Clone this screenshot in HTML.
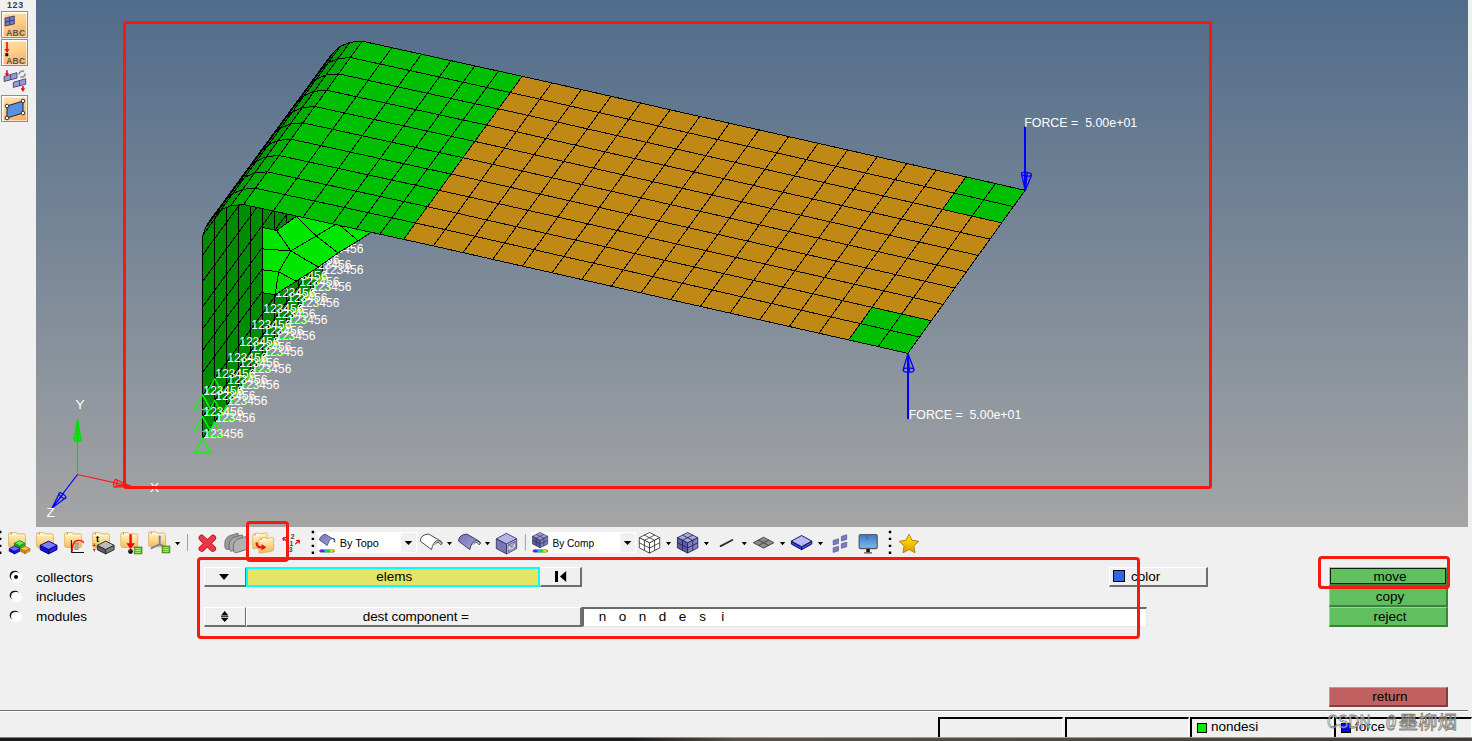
<!DOCTYPE html>
<html><head><meta charset="utf-8"><title>HyperMesh organize</title>
<style>
*{box-sizing:border-box;margin:0;padding:0}
html,body{width:1472px;height:741px;overflow:hidden;background:#f0f0f0;font-family:"Liberation Sans","Noto Sans CJK SC",sans-serif;font-size:13.5px;color:#000}
.abs,.abs>*{position:absolute}
#view{position:absolute;left:36px;top:0;width:1432px;height:527px;background:linear-gradient(180deg,#506c8a 0%,#a5a5a5 100%)}
svg.vp{position:absolute;left:0;top:0;display:block}
.lab text{font-size:12.8px;fill:#fff;font-family:"Liberation Sans",sans-serif}
.frc text{font-size:13.1px;fill:#fff;font-family:"Liberation Sans",sans-serif}
.axl text{font-size:13.6px;fill:#fff;font-family:"Liberation Sans",sans-serif}
.red{position:absolute;border:3.2px solid #f7190f;border-radius:4px;pointer-events:none}
.ico{position:absolute;display:block}
.btn{position:absolute;background:#f0f0f0;border-top:1px solid #fff;border-left:1px solid #fff;border-right:2px solid #6e6e6e;border-bottom:2px solid #6e6e6e;text-align:center;line-height:17px;white-space:nowrap}
.gbtn{position:absolute;left:1329px;width:119px;padding-left:4px;background:#60c060;border-top:1px solid #8fd98f;border-left:1px solid #8fd98f;border-right:2px solid #3f7f3f;border-bottom:2px solid #3f7f3f;text-align:center;line-height:16px}
.radio{position:absolute;left:11.4px;width:9.6px;height:9.6px;border-radius:50%;background:#fff;box-shadow:-1.3px -1.3px 0 0 #1a1a1a, .6px .6px 0 .6px #fff}

.radio.on:after{content:"";position:absolute;left:2.8px;top:2.8px;width:4px;height:4px;border-radius:50%;background:#000}
.rl{position:absolute;left:36px;line-height:16px}
.tb{position:absolute;font-size:11.6px;transform-origin:0 50%;transform:scaleX(.91);white-space:nowrap;line-height:14px}
.dd{position:absolute;width:0;height:0;border-left:3.5px solid transparent;border-right:3.5px solid transparent;border-top:4px solid #000}
.sbox{position:absolute;top:717px;height:21px;border-top:2px solid #000;border-left:2px solid #000;border-right:1px solid #fff;background:#f0f0f0}
</style></head>
<body>
<div id="view"><svg class="vp" width="1432" height="527" viewBox="36 0 1432 527">
<g stroke="#000" stroke-width="1" stroke-linejoin="round" shape-rendering="crispEdges">
<polygon points="322.6,253.3 310.6,269.6 310.6,291.1 322.6,274.8" fill="#008c00"/>
<polygon points="310.6,269.6 298.6,286 298.6,307.5 310.6,291.1" fill="#008c00"/>
<polygon points="298.6,286 286.6,302.4 286.6,323.9 298.6,307.5" fill="#008c00"/>
<polygon points="286.6,302.4 274.6,318.7 274.6,340.2 286.6,323.9" fill="#008c00"/>
<polygon points="274.6,318.7 262.6,335.1 262.6,356.6 274.6,340.2" fill="#008c00"/>
<polygon points="262.6,335.1 250.6,351.4 250.6,372.9 262.6,356.6" fill="#008c00"/>
<polygon points="250.6,351.4 238.6,367.8 238.6,389.2 250.6,372.9" fill="#008c00"/>
<polygon points="238.6,367.8 226.6,384.1 226.6,405.6 238.6,389.2" fill="#008c00"/>
<polygon points="226.6,384.1 214.6,400.4 214.6,421.9 226.6,405.6" fill="#008c00"/>
<polygon points="214.6,400.4 202.6,416.8 202.6,438.3 214.6,421.9" fill="#008c00"/>
<polygon points="322.6,231.6 310.6,248 310.6,269.6 322.6,253.3" fill="#008c00"/>
<polygon points="310.6,248 298.6,264.3 298.6,286 310.6,269.6" fill="#008c00"/>
<polygon points="298.6,264.3 286.6,280.6 286.6,302.4 298.6,286" fill="#008c00"/>
<polygon points="286.6,280.6 274.6,297 274.6,318.7 286.6,302.4" fill="#008c00"/>
<polygon points="274.6,297 262.6,313.4 262.6,335.1 274.6,318.7" fill="#008c00"/>
<polygon points="262.6,313.4 250.6,329.7 250.6,351.4 262.6,335.1" fill="#008c00"/>
<polygon points="250.6,329.7 238.6,346.1 238.6,367.8 250.6,351.4" fill="#008c00"/>
<polygon points="238.6,346.1 226.6,362.4 226.6,384.1 238.6,367.8" fill="#008c00"/>
<polygon points="226.6,362.4 214.6,378.8 214.6,400.4 226.6,384.1" fill="#008c00"/>
<polygon points="214.6,378.8 202.6,395.1 202.6,416.8 214.6,400.4" fill="#008c00"/>
<polygon points="322.6,209.1 310.6,225.5 310.6,248 322.6,231.6" fill="#008c00"/>
<polygon points="310.6,225.5 298.6,241.8 298.6,264.3 310.6,248" fill="#008c00"/>
<polygon points="298.6,241.8 286.6,258.1 286.6,280.6 298.6,264.3" fill="#008c00"/>
<polygon points="286.6,258.1 274.6,274.5 274.6,297 286.6,280.6" fill="#008c00"/>
<polygon points="274.6,274.5 262.6,290.9 262.6,313.4 274.6,297" fill="#008c00"/>
<polygon points="262.6,290.9 250.6,307.2 250.6,329.7 262.6,313.4" fill="#008c00"/>
<polygon points="250.6,307.2 238.6,323.6 238.6,346.1 250.6,329.7" fill="#008c00"/>
<polygon points="238.6,323.6 226.6,339.9 226.6,362.4 238.6,346.1" fill="#008c00"/>
<polygon points="226.6,339.9 214.6,356.2 214.6,378.8 226.6,362.4" fill="#008c00"/>
<polygon points="214.6,356.2 202.6,372.6 202.6,395.1 214.6,378.8" fill="#008c00"/>
<polygon points="322.6,186.8 310.6,203.2 310.6,225.5 322.6,209.1" fill="#008c00"/>
<polygon points="310.6,203.2 298.6,219.5 298.6,241.8 310.6,225.5" fill="#008c00"/>
<polygon points="298.6,219.5 286.6,235.8 286.6,258.1 298.6,241.8" fill="#008c00"/>
<polygon points="286.6,235.8 274.6,252.2 274.6,274.5 286.6,258.1" fill="#008c00"/>
<polygon points="274.6,252.2 262.6,268.6 262.6,290.9 274.6,274.5" fill="#008c00"/>
<polygon points="262.6,268.6 250.6,284.9 250.6,307.2 262.6,290.9" fill="#008c00"/>
<polygon points="250.6,284.9 238.6,301.2 238.6,323.6 250.6,307.2" fill="#008c00"/>
<polygon points="238.6,301.2 226.6,317.6 226.6,339.9 238.6,323.6" fill="#008c00"/>
<polygon points="226.6,317.6 214.6,333.9 214.6,356.2 226.6,339.9" fill="#008c00"/>
<polygon points="214.6,333.9 202.6,350.3 202.6,372.6 214.6,356.2" fill="#008c00"/>
<polygon points="322.6,165.3 310.6,181.7 310.6,203.2 322.6,186.8" fill="#008c00"/>
<polygon points="310.6,181.7 298.6,198 298.6,219.5 310.6,203.2" fill="#008c00"/>
<polygon points="298.6,198 286.6,214.3 286.6,235.8 298.6,219.5" fill="#008c00"/>
<polygon points="286.6,214.3 274.6,230.7 274.6,252.2 286.6,235.8" fill="#008c00"/>
<polygon points="274.6,230.7 262.6,247.1 262.6,268.6 274.6,252.2" fill="#008c00"/>
<polygon points="262.6,247.1 250.6,263.4 250.6,284.9 262.6,268.6" fill="#008c00"/>
<polygon points="250.6,263.4 238.6,279.8 238.6,301.2 250.6,284.9" fill="#008c00"/>
<polygon points="238.6,279.8 226.6,296.1 226.6,317.6 238.6,301.2" fill="#008c00"/>
<polygon points="226.6,296.1 214.6,312.4 214.6,333.9 226.6,317.6" fill="#008c00"/>
<polygon points="214.6,312.4 202.6,328.8 202.6,350.3 214.6,333.9" fill="#008c00"/>
<polygon points="322.6,143.3 310.6,159.7 310.6,181.7 322.6,165.3" fill="#008c00"/>
<polygon points="310.6,159.7 298.6,176 298.6,198 310.6,181.7" fill="#008c00"/>
<polygon points="298.6,176 286.6,192.3 286.6,214.3 298.6,198" fill="#008c00"/>
<polygon points="286.6,192.3 274.6,208.7 274.6,230.7 286.6,214.3" fill="#008c00"/>
<polygon points="274.6,208.7 262.6,225.1 262.6,247.1 274.6,230.7" fill="#008c00"/>
<polygon points="262.6,225.1 250.6,241.4 250.6,263.4 262.6,247.1" fill="#008c00"/>
<polygon points="250.6,241.4 238.6,257.8 238.6,279.8 250.6,263.4" fill="#008c00"/>
<polygon points="238.6,257.8 226.6,274.1 226.6,296.1 238.6,279.8" fill="#008c00"/>
<polygon points="226.6,274.1 214.6,290.4 214.6,312.4 226.6,296.1" fill="#008c00"/>
<polygon points="214.6,290.4 202.6,306.8 202.6,328.8 214.6,312.4" fill="#008c00"/>
<polygon points="322.6,117.9 310.6,134.2 310.6,159.7 322.6,143.3" fill="#008c00"/>
<polygon points="310.6,134.2 298.6,150.6 298.6,176 310.6,159.7" fill="#008c00"/>
<polygon points="298.6,150.6 286.6,166.9 286.6,192.3 298.6,176" fill="#008c00"/>
<polygon points="286.6,166.9 274.6,183.3 274.6,208.7 286.6,192.3" fill="#008c00"/>
<polygon points="274.6,183.3 262.6,199.6 262.6,225.1 274.6,208.7" fill="#008c00"/>
<polygon points="262.6,199.6 250.6,216 250.6,241.4 262.6,225.1" fill="#008c00"/>
<polygon points="250.6,216 238.6,232.3 238.6,257.8 250.6,241.4" fill="#008c00"/>
<polygon points="238.6,232.3 226.6,248.7 226.6,274.1 238.6,257.8" fill="#008c00"/>
<polygon points="226.6,248.7 214.6,265 214.6,290.4 226.6,274.1" fill="#008c00"/>
<polygon points="214.6,265 202.6,281.4 202.6,306.8 214.6,290.4" fill="#008c00"/>
<polygon points="322.6,91.5 310.6,107.8 310.6,134.2 322.6,117.9" fill="#008c00"/>
<polygon points="310.6,107.8 298.6,124.2 298.6,150.6 310.6,134.2" fill="#008c00"/>
<polygon points="298.6,124.2 286.6,140.5 286.6,166.9 298.6,150.6" fill="#008c00"/>
<polygon points="286.6,140.5 274.6,156.9 274.6,183.3 286.6,166.9" fill="#008c00"/>
<polygon points="274.6,156.9 262.6,173.2 262.6,199.6 274.6,183.3" fill="#008c00"/>
<polygon points="262.6,173.2 250.6,189.6 250.6,216 262.6,199.6" fill="#008c00"/>
<polygon points="250.6,189.6 238.6,205.9 238.6,232.3 250.6,216" fill="#008c00"/>
<polygon points="238.6,205.9 226.6,222.3 226.6,248.7 238.6,232.3" fill="#008c00"/>
<polygon points="226.6,222.3 214.6,238.7 214.6,265 226.6,248.7" fill="#008c00"/>
<polygon points="214.6,238.7 202.6,255 202.6,281.4 214.6,265" fill="#008c00"/>
<polygon points="322.9,71.5 310.9,87.8 310.6,107.8 322.6,91.5" fill="#008c00"/>
<polygon points="310.9,87.8 298.9,104.2 298.6,124.2 310.6,107.8" fill="#008c00"/>
<polygon points="298.9,104.2 286.9,120.5 286.6,140.5 298.6,124.2" fill="#008c00"/>
<polygon points="286.9,120.5 274.9,136.9 274.6,156.9 286.6,140.5" fill="#008c00"/>
<polygon points="274.9,136.9 262.9,153.2 262.6,173.2 274.6,156.9" fill="#008c00"/>
<polygon points="262.9,153.2 250.9,169.6 250.6,189.6 262.6,173.2" fill="#008c00"/>
<polygon points="250.9,169.6 238.9,185.9 238.6,205.9 250.6,189.6" fill="#008c00"/>
<polygon points="238.9,185.9 226.9,202.3 226.6,222.3 238.6,205.9" fill="#008c00"/>
<polygon points="226.9,202.3 214.9,218.7 214.6,238.7 226.6,222.3" fill="#008c00"/>
<polygon points="214.9,218.7 202.9,235 202.6,255 214.6,238.7" fill="#008c00"/>
<polygon points="325.4,64.3 313.4,80.7 310.9,87.8 322.9,71.5" fill="#008800"/>
<polygon points="313.4,80.7 301.4,97 298.9,104.2 310.9,87.8" fill="#008800"/>
<polygon points="301.4,97 289.5,113.4 286.9,120.5 298.9,104.2" fill="#008800"/>
<polygon points="289.5,113.4 277.5,129.7 274.9,136.9 286.9,120.5" fill="#008800"/>
<polygon points="277.5,129.7 265.5,146.1 262.9,153.2 274.9,136.9" fill="#008800"/>
<polygon points="265.5,146.1 253.5,162.4 250.9,169.6 262.9,153.2" fill="#008800"/>
<polygon points="253.5,162.4 241.5,178.8 238.9,185.9 250.9,169.6" fill="#008800"/>
<polygon points="241.5,178.8 229.6,195.1 226.9,202.3 238.9,185.9" fill="#008800"/>
<polygon points="229.6,195.1 217.6,211.5 214.9,218.7 226.9,202.3" fill="#008800"/>
<polygon points="217.6,211.5 205.6,227.8 202.9,235 214.9,218.7" fill="#008800"/>
<polygon points="329,57.8 317,74.1 313.4,80.7 325.4,64.3" fill="#008000"/>
<polygon points="317,74.1 305.1,90.5 301.4,97 313.4,80.7" fill="#008000"/>
<polygon points="305.1,90.5 293.1,106.8 289.5,113.4 301.4,97" fill="#008000"/>
<polygon points="293.1,106.8 281.2,123.1 277.5,129.7 289.5,113.4" fill="#008000"/>
<polygon points="281.2,123.1 269.2,139.5 265.5,146.1 277.5,129.7" fill="#008000"/>
<polygon points="269.2,139.5 257.2,155.8 253.5,162.4 265.5,146.1" fill="#008000"/>
<polygon points="257.2,155.8 245.3,172.2 241.5,178.8 253.5,162.4" fill="#008000"/>
<polygon points="245.3,172.2 233.3,188.5 229.6,195.1 241.5,178.8" fill="#008000"/>
<polygon points="233.3,188.5 221.4,204.9 217.6,211.5 229.6,195.1" fill="#008000"/>
<polygon points="221.4,204.9 209.4,221.2 205.6,227.8 217.6,211.5" fill="#008000"/>
</g>
<g fill="none" stroke="#00ff00" stroke-width="1.3">
<path d="M214.6 378.8l-8.2 14.6h16.4z"/>
<path d="M202.6 395.1l-8.2 14.6h16.4z"/>
<path d="M214.6 400.4l-8.2 14.6h16.4z"/>
<path d="M202.6 416.8l-8.2 14.6h16.4z"/>
<path d="M322.6 274.8l-8.2 14.6h16.4z"/>
<path d="M310.6 291.1l-8.2 14.6h16.4z"/>
<path d="M298.6 307.5l-8.2 14.6h16.4z"/>
<path d="M286.6 323.9l-8.2 14.6h16.4z"/>
<path d="M274.6 340.2l-8.2 14.6h16.4z"/>
<path d="M262.6 356.6l-8.2 14.6h16.4z"/>
<path d="M250.6 372.9l-8.2 14.6h16.4z"/>
<path d="M238.6 389.2l-8.2 14.6h16.4z"/>
<path d="M226.6 405.6l-8.2 14.6h16.4z"/>
<path d="M214.6 421.9l-8.2 14.6h16.4z"/>
<path d="M202.6 438.3l-8.2 14.6h16.4z"/>
</g>
<g class="lab">
<text x="323.2" y="231.2" textLength="40.2" lengthAdjust="spacingAndGlyphs">123456</text>
<text x="311.2" y="247.6" textLength="40.2" lengthAdjust="spacingAndGlyphs">123456</text>
<text x="299.2" y="263.9" textLength="40.2" lengthAdjust="spacingAndGlyphs">123456</text>
<text x="287.2" y="280.2" textLength="40.2" lengthAdjust="spacingAndGlyphs">123456</text>
<text x="275.2" y="296.6" textLength="40.2" lengthAdjust="spacingAndGlyphs">123456</text>
<text x="263.2" y="313" textLength="40.2" lengthAdjust="spacingAndGlyphs">123456</text>
<text x="251.2" y="329.3" textLength="40.2" lengthAdjust="spacingAndGlyphs">123456</text>
<text x="239.2" y="345.7" textLength="40.2" lengthAdjust="spacingAndGlyphs">123456</text>
<text x="227.2" y="362" textLength="40.2" lengthAdjust="spacingAndGlyphs">123456</text>
<text x="215.2" y="378.4" textLength="40.2" lengthAdjust="spacingAndGlyphs">123456</text>
<text x="203.2" y="394.7" textLength="40.2" lengthAdjust="spacingAndGlyphs">123456</text>
<text x="323.2" y="252.9" textLength="40.2" lengthAdjust="spacingAndGlyphs">123456</text>
<text x="311.2" y="269.2" textLength="40.2" lengthAdjust="spacingAndGlyphs">123456</text>
<text x="299.2" y="285.6" textLength="40.2" lengthAdjust="spacingAndGlyphs">123456</text>
<text x="287.2" y="302" textLength="40.2" lengthAdjust="spacingAndGlyphs">123456</text>
<text x="275.2" y="318.3" textLength="40.2" lengthAdjust="spacingAndGlyphs">123456</text>
<text x="263.2" y="334.7" textLength="40.2" lengthAdjust="spacingAndGlyphs">123456</text>
<text x="251.2" y="351" textLength="40.2" lengthAdjust="spacingAndGlyphs">123456</text>
<text x="239.2" y="367.4" textLength="40.2" lengthAdjust="spacingAndGlyphs">123456</text>
<text x="227.2" y="383.7" textLength="40.2" lengthAdjust="spacingAndGlyphs">123456</text>
<text x="215.2" y="400.1" textLength="40.2" lengthAdjust="spacingAndGlyphs">123456</text>
<text x="203.2" y="416.4" textLength="40.2" lengthAdjust="spacingAndGlyphs">123456</text>
<text x="323.2" y="274.4" textLength="40.2" lengthAdjust="spacingAndGlyphs">123456</text>
<text x="311.2" y="290.8" textLength="40.2" lengthAdjust="spacingAndGlyphs">123456</text>
<text x="299.2" y="307.1" textLength="40.2" lengthAdjust="spacingAndGlyphs">123456</text>
<text x="287.2" y="323.5" textLength="40.2" lengthAdjust="spacingAndGlyphs">123456</text>
<text x="275.2" y="339.8" textLength="40.2" lengthAdjust="spacingAndGlyphs">123456</text>
<text x="263.2" y="356.2" textLength="40.2" lengthAdjust="spacingAndGlyphs">123456</text>
<text x="251.2" y="372.5" textLength="40.2" lengthAdjust="spacingAndGlyphs">123456</text>
<text x="239.2" y="388.9" textLength="40.2" lengthAdjust="spacingAndGlyphs">123456</text>
<text x="227.2" y="405.2" textLength="40.2" lengthAdjust="spacingAndGlyphs">123456</text>
<text x="215.2" y="421.6" textLength="40.2" lengthAdjust="spacingAndGlyphs">123456</text>
<text x="203.2" y="437.9" textLength="40.2" lengthAdjust="spacingAndGlyphs">123456</text>
</g>
<g stroke="#000" stroke-width="1" stroke-linejoin="round" shape-rendering="crispEdges">
<polygon points="262.4,227.3 276.6,230.6 307.9,208 378.5,227.6 371.7,232 358.2,240.8 338,252.9 318.4,267.1 296.2,281.2 275.2,294.7 262.4,292.7" fill="#00e600"/>
<line x1="276.6" y1="230.6" x2="290.8" y2="250.9"/>
<line x1="262.4" y1="248.9" x2="290.8" y2="250.9"/>
<line x1="290.8" y1="250.9" x2="316.4" y2="236"/>
<line x1="290.8" y1="250.9" x2="278.6" y2="271.8"/>
<line x1="262.4" y1="269.8" x2="278.6" y2="271.8"/>
<line x1="278.6" y1="271.8" x2="296.2" y2="281.2"/>
<line x1="290.8" y1="250.9" x2="318.4" y2="267.1"/>
<line x1="278.6" y1="271.8" x2="275.2" y2="294.7"/>
<line x1="316.4" y1="236" x2="338" y2="252.9"/>
<line x1="337.3" y1="223.2" x2="358.2" y2="240.8"/>
<line x1="296.2" y1="216.5" x2="316.4" y2="236"/>
<line x1="316.4" y1="236" x2="347.8" y2="216.8"/>
<polygon points="334.3,51.8 322.4,68.1 317,74.1 329,57.8" fill="#007a00"/>
<polygon points="322.4,68.1 310.4,84.5 305.1,90.5 317,74.1" fill="#007a00"/>
<polygon points="310.4,84.5 298.5,100.8 293.1,106.8 305.1,90.5" fill="#007a00"/>
<polygon points="298.5,100.8 286.5,117.2 281.2,123.1 293.1,106.8" fill="#007a00"/>
<polygon points="286.5,117.2 274.6,133.5 269.2,139.5 281.2,123.1" fill="#007a00"/>
<polygon points="274.6,133.5 262.7,149.8 257.2,155.8 269.2,139.5" fill="#007a00"/>
<polygon points="262.7,149.8 250.7,166.2 245.3,172.2 257.2,155.8" fill="#007a00"/>
<polygon points="250.7,166.2 238.8,182.5 233.3,188.5 245.3,172.2" fill="#007a00"/>
<polygon points="238.8,182.5 226.8,198.9 221.4,204.9 233.3,188.5" fill="#007a00"/>
<polygon points="226.8,198.9 214.9,215.2 209.4,221.2 221.4,204.9" fill="#007a00"/>
<polygon points="340.1,46.5 328.2,62.9 322.4,68.1 334.3,51.8" fill="#008800"/>
<polygon points="328.2,62.9 316.3,79.2 310.4,84.5 322.4,68.1" fill="#008800"/>
<polygon points="316.3,79.2 304.3,95.5 298.5,100.8 310.4,84.5" fill="#008800"/>
<polygon points="304.3,95.5 292.4,111.9 286.5,117.2 298.5,100.8" fill="#008800"/>
<polygon points="292.4,111.9 280.5,128.2 274.6,133.5 286.5,117.2" fill="#008800"/>
<polygon points="280.5,128.2 268.6,144.6 262.7,149.8 274.6,133.5" fill="#008800"/>
<polygon points="268.6,144.6 256.7,160.9 250.7,166.2 262.7,149.8" fill="#008800"/>
<polygon points="256.7,160.9 244.7,177.2 238.8,182.5 250.7,166.2" fill="#008800"/>
<polygon points="244.7,177.2 232.8,193.6 226.8,198.9 238.8,182.5" fill="#008800"/>
<polygon points="232.8,193.6 220.9,209.9 214.9,215.2 226.8,198.9" fill="#008800"/>
<polygon points="349.9,42.3 338,58.6 328.2,62.9 340.1,46.5" fill="#009a00"/>
<polygon points="338,58.6 326.1,74.9 316.3,79.2 328.2,62.9" fill="#009a00"/>
<polygon points="326.1,74.9 314.2,91.3 304.3,95.5 316.3,79.2" fill="#009a00"/>
<polygon points="314.2,91.3 302.3,107.6 292.4,111.9 304.3,95.5" fill="#009a00"/>
<polygon points="302.3,107.6 290.4,123.9 280.5,128.2 292.4,111.9" fill="#009a00"/>
<polygon points="290.4,123.9 278.5,140.3 268.6,144.6 280.5,128.2" fill="#009a00"/>
<polygon points="278.5,140.3 266.6,156.6 256.7,160.9 268.6,144.6" fill="#009a00"/>
<polygon points="266.6,156.6 254.7,172.9 244.7,177.2 256.7,160.9" fill="#009a00"/>
<polygon points="254.7,172.9 242.8,189.3 232.8,193.6 244.7,177.2" fill="#009a00"/>
<polygon points="242.8,189.3 230.9,205.6 220.9,209.9 232.8,193.6" fill="#009a00"/>
<polygon points="362.3,41.2 350.4,57.5 338,58.6 349.9,42.3" fill="#00ac00"/>
<polygon points="350.4,57.5 338.5,73.9 326.1,74.9 338,58.6" fill="#00ac00"/>
<polygon points="338.5,73.9 326.7,90.2 314.2,91.3 326.1,74.9" fill="#00ac00"/>
<polygon points="326.7,90.2 314.8,106.5 302.3,107.6 314.2,91.3" fill="#00ac00"/>
<polygon points="314.8,106.5 302.9,122.9 290.4,123.9 302.3,107.6" fill="#00ac00"/>
<polygon points="302.9,122.9 291,139.2 278.5,140.3 290.4,123.9" fill="#00ac00"/>
<polygon points="291,139.2 279.1,155.5 266.6,156.6 278.5,140.3" fill="#00ac00"/>
<polygon points="279.1,155.5 267.3,171.8 254.7,172.9 266.6,156.6" fill="#00ac00"/>
<polygon points="267.3,171.8 255.4,188.2 242.8,189.3 254.7,172.9" fill="#00ac00"/>
<polygon points="255.4,188.2 243.5,204.5 230.9,205.6 242.8,189.3" fill="#00ac00"/>
<polygon points="362.3,41.2 391.9,47.7 380,64 350.4,57.5" fill="#00be00"/>
<polygon points="350.4,57.5 380,64 368.2,80.3 338.5,73.9" fill="#00be00"/>
<polygon points="338.5,73.9 368.2,80.3 356.3,96.7 326.7,90.2" fill="#00be00"/>
<polygon points="326.7,90.2 356.3,96.7 344.4,113 314.8,106.5" fill="#00be00"/>
<polygon points="314.8,106.5 344.4,113 332.6,129.3 302.9,122.9" fill="#00be00"/>
<polygon points="302.9,122.9 332.6,129.3 320.7,145.6 291,139.2" fill="#00be00"/>
<polygon points="291,139.2 320.7,145.6 308.8,162 279.1,155.5" fill="#00be00"/>
<polygon points="279.1,155.5 308.8,162 296.9,178.3 267.3,171.8" fill="#00be00"/>
<polygon points="267.3,171.8 296.9,178.3 285,194.6 255.4,188.2" fill="#00be00"/>
<polygon points="255.4,188.2 285,194.6 273.2,211 243.5,204.5" fill="#00be00"/>
<polygon points="391.9,47.7 421.5,54.2 409.7,70.5 380,64" fill="#00be00"/>
<polygon points="380,64 409.7,70.5 397.8,86.8 368.2,80.3" fill="#00be00"/>
<polygon points="368.2,80.3 397.8,86.8 385.9,103.1 356.3,96.7" fill="#00be00"/>
<polygon points="356.3,96.7 385.9,103.1 374.1,119.5 344.4,113" fill="#00be00"/>
<polygon points="344.4,113 374.1,119.5 362.2,135.8 332.6,129.3" fill="#00be00"/>
<polygon points="332.6,129.3 362.2,135.8 350.3,152.1 320.7,145.6" fill="#00be00"/>
<polygon points="320.7,145.6 350.3,152.1 338.5,168.4 308.8,162" fill="#00be00"/>
<polygon points="308.8,162 338.5,168.4 326.6,184.7 296.9,178.3" fill="#00be00"/>
<polygon points="296.9,178.3 326.6,184.7 314.7,201.1 285,194.6" fill="#00be00"/>
<polygon points="285,194.6 314.7,201.1 302.8,217.4 273.2,211" fill="#00be00"/>
<polygon points="421.5,54.2 451.1,60.7 439.3,77 409.7,70.5" fill="#00be00"/>
<polygon points="409.7,70.5 439.3,77 427.4,93.3 397.8,86.8" fill="#00be00"/>
<polygon points="397.8,86.8 427.4,93.3 415.6,109.6 385.9,103.1" fill="#00be00"/>
<polygon points="385.9,103.1 415.6,109.6 403.7,125.9 374.1,119.5" fill="#00be00"/>
<polygon points="374.1,119.5 403.7,125.9 391.8,142.2 362.2,135.8" fill="#00be00"/>
<polygon points="362.2,135.8 391.8,142.2 380,158.6 350.3,152.1" fill="#00be00"/>
<polygon points="350.3,152.1 380,158.6 368.1,174.9 338.5,168.4" fill="#00be00"/>
<polygon points="338.5,168.4 368.1,174.9 356.2,191.2 326.6,184.7" fill="#00be00"/>
<polygon points="326.6,184.7 356.2,191.2 344.4,207.5 314.7,201.1" fill="#00be00"/>
<polygon points="314.7,201.1 344.4,207.5 332.5,223.9 302.8,217.4" fill="#00be00"/>
<polygon points="451.1,60.7 474.8,65.9 463,82.2 439.3,77" fill="#00be00"/>
<polygon points="439.3,77 463,82.2 451.1,98.5 427.4,93.3" fill="#00be00"/>
<polygon points="427.4,93.3 451.1,98.5 439.3,114.8 415.6,109.6" fill="#00be00"/>
<polygon points="415.6,109.6 439.3,114.8 427.4,131.1 403.7,125.9" fill="#00be00"/>
<polygon points="403.7,125.9 427.4,131.1 415.6,147.4 391.8,142.2" fill="#00be00"/>
<polygon points="391.8,142.2 415.6,147.4 403.7,163.7 380,158.6" fill="#00be00"/>
<polygon points="380,158.6 403.7,163.7 391.8,180 368.1,174.9" fill="#00be00"/>
<polygon points="368.1,174.9 391.8,180 380,196.4 356.2,191.2" fill="#00be00"/>
<polygon points="356.2,191.2 380,196.4 368.1,212.7 344.4,207.5" fill="#00be00"/>
<polygon points="344.4,207.5 368.1,212.7 356.2,229 332.5,223.9" fill="#00be00"/>
<polygon points="474.8,65.9 498.5,71.1 486.7,87.4 463,82.2" fill="#00be00"/>
<polygon points="463,82.2 486.7,87.4 474.8,103.7 451.1,98.5" fill="#00be00"/>
<polygon points="451.1,98.5 474.8,103.7 463,120 439.3,114.8" fill="#00be00"/>
<polygon points="439.3,114.8 463,120 451.1,136.3 427.4,131.1" fill="#00be00"/>
<polygon points="427.4,131.1 451.1,136.3 439.3,152.6 415.6,147.4" fill="#00be00"/>
<polygon points="415.6,147.4 439.3,152.6 427.4,168.9 403.7,163.7" fill="#00be00"/>
<polygon points="403.7,163.7 427.4,168.9 415.6,185.2 391.8,180" fill="#00be00"/>
<polygon points="391.8,180 415.6,185.2 403.7,201.5 380,196.4" fill="#00be00"/>
<polygon points="380,196.4 403.7,201.5 391.8,217.9 368.1,212.7" fill="#00be00"/>
<polygon points="368.1,212.7 391.8,217.9 379.9,234.2 356.2,229" fill="#00be00"/>
<polygon points="498.5,71.1 522.2,76.3 510.3,92.6 486.7,87.4" fill="#00be00"/>
<polygon points="486.7,87.4 510.3,92.6 498.5,108.9 474.8,103.7" fill="#00be00"/>
<polygon points="474.8,103.7 498.5,108.9 486.7,125.1 463,120" fill="#00be00"/>
<polygon points="463,120 486.7,125.1 474.8,141.4 451.1,136.3" fill="#00be00"/>
<polygon points="451.1,136.3 474.8,141.4 463,157.7 439.3,152.6" fill="#00be00"/>
<polygon points="439.3,152.6 463,157.7 451.1,174 427.4,168.9" fill="#00be00"/>
<polygon points="427.4,168.9 451.1,174 439.3,190.4 415.6,185.2" fill="#00be00"/>
<polygon points="415.6,185.2 439.3,190.4 427.4,206.7 403.7,201.5" fill="#00be00"/>
<polygon points="403.7,201.5 427.4,206.7 415.5,223 391.8,217.9" fill="#00be00"/>
<polygon points="391.8,217.9 415.5,223 403.7,239.4 379.9,234.2" fill="#00be00"/>
<polygon points="522.2,76.3 551.8,82.9 539.9,99.1 510.3,92.6" fill="#c08814"/>
<polygon points="510.3,92.6 539.9,99.1 528.1,115.4 498.5,108.9" fill="#c08814"/>
<polygon points="498.5,108.9 528.1,115.4 516.3,131.7 486.7,125.1" fill="#c08814"/>
<polygon points="486.7,125.1 516.3,131.7 504.5,148 474.8,141.4" fill="#c08814"/>
<polygon points="474.8,141.4 504.5,148 492.6,164.3 463,157.7" fill="#c08814"/>
<polygon points="463,157.7 492.6,164.3 480.8,180.6 451.1,174" fill="#c08814"/>
<polygon points="451.1,174 480.8,180.6 468.9,196.9 439.3,190.4" fill="#c08814"/>
<polygon points="439.3,190.4 468.9,196.9 457.1,213.2 427.4,206.7" fill="#c08814"/>
<polygon points="427.4,206.7 457.1,213.2 445.2,229.6 415.5,223" fill="#c08814"/>
<polygon points="415.5,223 445.2,229.6 433.3,245.9 403.7,239.4" fill="#c08814"/>
<polygon points="551.8,82.9 581.4,89.6 569.6,105.9 539.9,99.1" fill="#c08814"/>
<polygon points="539.9,99.1 569.6,105.9 557.7,122.1 528.1,115.4" fill="#c08814"/>
<polygon points="528.1,115.4 557.7,122.1 545.9,138.4 516.3,131.7" fill="#c08814"/>
<polygon points="516.3,131.7 545.9,138.4 534.1,154.7 504.5,148" fill="#c08814"/>
<polygon points="504.5,148 534.1,154.7 522.3,171 492.6,164.3" fill="#c08814"/>
<polygon points="492.6,164.3 522.3,171 510.4,187.3 480.8,180.6" fill="#c08814"/>
<polygon points="480.8,180.6 510.4,187.3 498.6,203.6 468.9,196.9" fill="#c08814"/>
<polygon points="468.9,196.9 498.6,203.6 486.7,220 457.1,213.2" fill="#c08814"/>
<polygon points="457.1,213.2 486.7,220 474.9,236.3 445.2,229.6" fill="#c08814"/>
<polygon points="445.2,229.6 474.9,236.3 463,252.6 433.3,245.9" fill="#c08814"/>
<polygon points="581.4,89.6 611,96.3 599.2,112.6 569.6,105.9" fill="#c08814"/>
<polygon points="569.6,105.9 599.2,112.6 587.4,128.9 557.7,122.1" fill="#c08814"/>
<polygon points="557.7,122.1 587.4,128.9 575.6,145.2 545.9,138.4" fill="#c08814"/>
<polygon points="545.9,138.4 575.6,145.2 563.7,161.4 534.1,154.7" fill="#c08814"/>
<polygon points="534.1,154.7 563.7,161.4 551.9,177.7 522.3,171" fill="#c08814"/>
<polygon points="522.3,171 551.9,177.7 540.1,194.1 510.4,187.3" fill="#c08814"/>
<polygon points="510.4,187.3 540.1,194.1 528.2,210.4 498.6,203.6" fill="#c08814"/>
<polygon points="498.6,203.6 528.2,210.4 516.4,226.7 486.7,220" fill="#c08814"/>
<polygon points="486.7,220 516.4,226.7 504.6,243 474.9,236.3" fill="#c08814"/>
<polygon points="474.9,236.3 504.6,243 492.7,259.4 463,252.6" fill="#c08814"/>
<polygon points="611,96.3 640.6,103 628.8,119.3 599.2,112.6" fill="#c08814"/>
<polygon points="599.2,112.6 628.8,119.3 617,135.6 587.4,128.9" fill="#c08814"/>
<polygon points="587.4,128.9 617,135.6 605.2,151.9 575.6,145.2" fill="#c08814"/>
<polygon points="575.6,145.2 605.2,151.9 593.4,168.2 563.7,161.4" fill="#c08814"/>
<polygon points="563.7,161.4 593.4,168.2 581.6,184.5 551.9,177.7" fill="#c08814"/>
<polygon points="551.9,177.7 581.6,184.5 569.7,200.8 540.1,194.1" fill="#c08814"/>
<polygon points="540.1,194.1 569.7,200.8 557.9,217.1 528.2,210.4" fill="#c08814"/>
<polygon points="528.2,210.4 557.9,217.1 546.1,233.4 516.4,226.7" fill="#c08814"/>
<polygon points="516.4,226.7 546.1,233.4 534.2,249.7 504.6,243" fill="#c08814"/>
<polygon points="504.6,243 534.2,249.7 522.4,266.1 492.7,259.4" fill="#c08814"/>
<polygon points="640.6,103 670.2,109.8 658.4,126 628.8,119.3" fill="#c08814"/>
<polygon points="628.8,119.3 658.4,126 646.6,142.3 617,135.6" fill="#c08814"/>
<polygon points="617,135.6 646.6,142.3 634.8,158.6 605.2,151.9" fill="#c08814"/>
<polygon points="605.2,151.9 634.8,158.6 623,174.9 593.4,168.2" fill="#c08814"/>
<polygon points="593.4,168.2 623,174.9 611.2,191.2 581.6,184.5" fill="#c08814"/>
<polygon points="581.6,184.5 611.2,191.2 599.4,207.5 569.7,200.8" fill="#c08814"/>
<polygon points="569.7,200.8 599.4,207.5 587.6,223.8 557.9,217.1" fill="#c08814"/>
<polygon points="557.9,217.1 587.6,223.8 575.7,240.1 546.1,233.4" fill="#c08814"/>
<polygon points="546.1,233.4 575.7,240.1 563.9,256.5 534.2,249.7" fill="#c08814"/>
<polygon points="534.2,249.7 563.9,256.5 552.1,272.8 522.4,266.1" fill="#c08814"/>
<polygon points="670.2,109.8 699.8,116.5 688,132.7 658.4,126" fill="#c08814"/>
<polygon points="658.4,126 688,132.7 676.2,149 646.6,142.3" fill="#c08814"/>
<polygon points="646.6,142.3 676.2,149 664.4,165.3 634.8,158.6" fill="#c08814"/>
<polygon points="634.8,158.6 664.4,165.3 652.6,181.6 623,174.9" fill="#c08814"/>
<polygon points="623,174.9 652.6,181.6 640.8,197.9 611.2,191.2" fill="#c08814"/>
<polygon points="611.2,191.2 640.8,197.9 629,214.2 599.4,207.5" fill="#c08814"/>
<polygon points="599.4,207.5 629,214.2 617.2,230.5 587.6,223.8" fill="#c08814"/>
<polygon points="587.6,223.8 617.2,230.5 605.4,246.8 575.7,240.1" fill="#c08814"/>
<polygon points="575.7,240.1 605.4,246.8 593.6,263.2 563.9,256.5" fill="#c08814"/>
<polygon points="563.9,256.5 593.6,263.2 581.7,279.5 552.1,272.8" fill="#c08814"/>
<polygon points="699.8,116.5 729.4,123.2 717.6,139.5 688,132.7" fill="#c08814"/>
<polygon points="688,132.7 717.6,139.5 705.8,155.7 676.2,149" fill="#c08814"/>
<polygon points="676.2,149 705.8,155.7 694,172 664.4,165.3" fill="#c08814"/>
<polygon points="664.4,165.3 694,172 682.3,188.3 652.6,181.6" fill="#c08814"/>
<polygon points="652.6,181.6 682.3,188.3 670.5,204.6 640.8,197.9" fill="#c08814"/>
<polygon points="640.8,197.9 670.5,204.6 658.7,220.9 629,214.2" fill="#c08814"/>
<polygon points="629,214.2 658.7,220.9 646.9,237.2 617.2,230.5" fill="#c08814"/>
<polygon points="617.2,230.5 646.9,237.2 635,253.6 605.4,246.8" fill="#c08814"/>
<polygon points="605.4,246.8 635,253.6 623.2,269.9 593.6,263.2" fill="#c08814"/>
<polygon points="593.6,263.2 623.2,269.9 611.4,286.2 581.7,279.5" fill="#c08814"/>
<polygon points="729.4,123.2 759,129.9 747.2,146.2 717.6,139.5" fill="#c08814"/>
<polygon points="717.6,139.5 747.2,146.2 735.4,162.4 705.8,155.7" fill="#c08814"/>
<polygon points="705.8,155.7 735.4,162.4 723.7,178.7 694,172" fill="#c08814"/>
<polygon points="694,172 723.7,178.7 711.9,195 682.3,188.3" fill="#c08814"/>
<polygon points="682.3,188.3 711.9,195 700.1,211.3 670.5,204.6" fill="#c08814"/>
<polygon points="670.5,204.6 700.1,211.3 688.3,227.6 658.7,220.9" fill="#c08814"/>
<polygon points="658.7,220.9 688.3,227.6 676.5,244 646.9,237.2" fill="#c08814"/>
<polygon points="646.9,237.2 676.5,244 664.7,260.3 635,253.6" fill="#c08814"/>
<polygon points="635,253.6 664.7,260.3 652.9,276.6 623.2,269.9" fill="#c08814"/>
<polygon points="623.2,269.9 652.9,276.6 641.1,292.9 611.4,286.2" fill="#c08814"/>
<polygon points="759,129.9 788.6,136.6 776.8,152.9 747.2,146.2" fill="#c08814"/>
<polygon points="747.2,146.2 776.8,152.9 765,169.2 735.4,162.4" fill="#c08814"/>
<polygon points="735.4,162.4 765,169.2 753.3,185.4 723.7,178.7" fill="#c08814"/>
<polygon points="723.7,178.7 753.3,185.4 741.5,201.7 711.9,195" fill="#c08814"/>
<polygon points="711.9,195 741.5,201.7 729.7,218 700.1,211.3" fill="#c08814"/>
<polygon points="700.1,211.3 729.7,218 717.9,234.4 688.3,227.6" fill="#c08814"/>
<polygon points="688.3,227.6 717.9,234.4 706.1,250.7 676.5,244" fill="#c08814"/>
<polygon points="676.5,244 706.1,250.7 694.3,267 664.7,260.3" fill="#c08814"/>
<polygon points="664.7,260.3 694.3,267 682.5,283.3 652.9,276.6" fill="#c08814"/>
<polygon points="652.9,276.6 682.5,283.3 670.7,299.7 641.1,292.9" fill="#c08814"/>
<polygon points="788.6,136.6 818.1,143.3 806.4,159.6 776.8,152.9" fill="#c08814"/>
<polygon points="776.8,152.9 806.4,159.6 794.6,175.9 765,169.2" fill="#c08814"/>
<polygon points="765,169.2 794.6,175.9 782.9,192.2 753.3,185.4" fill="#c08814"/>
<polygon points="753.3,185.4 782.9,192.2 771.1,208.5 741.5,201.7" fill="#c08814"/>
<polygon points="741.5,201.7 771.1,208.5 759.3,224.8 729.7,218" fill="#c08814"/>
<polygon points="729.7,218 759.3,224.8 747.6,241.1 717.9,234.4" fill="#c08814"/>
<polygon points="717.9,234.4 747.6,241.1 735.8,257.4 706.1,250.7" fill="#c08814"/>
<polygon points="706.1,250.7 735.8,257.4 724,273.7 694.3,267" fill="#c08814"/>
<polygon points="694.3,267 724,273.7 712.2,290 682.5,283.3" fill="#c08814"/>
<polygon points="682.5,283.3 712.2,290 700.4,306.4 670.7,299.7" fill="#c08814"/>
<polygon points="818.1,143.3 847.7,150 836,166.3 806.4,159.6" fill="#c08814"/>
<polygon points="806.4,159.6 836,166.3 824.2,182.6 794.6,175.9" fill="#c08814"/>
<polygon points="794.6,175.9 824.2,182.6 812.5,198.9 782.9,192.2" fill="#c08814"/>
<polygon points="782.9,192.2 812.5,198.9 800.7,215.2 771.1,208.5" fill="#c08814"/>
<polygon points="771.1,208.5 800.7,215.2 788.9,231.5 759.3,224.8" fill="#c08814"/>
<polygon points="759.3,224.8 788.9,231.5 777.2,247.8 747.6,241.1" fill="#c08814"/>
<polygon points="747.6,241.1 777.2,247.8 765.4,264.1 735.8,257.4" fill="#c08814"/>
<polygon points="735.8,257.4 765.4,264.1 753.6,280.4 724,273.7" fill="#c08814"/>
<polygon points="724,273.7 753.6,280.4 741.8,296.8 712.2,290" fill="#c08814"/>
<polygon points="712.2,290 741.8,296.8 730,313.1 700.4,306.4" fill="#c08814"/>
<polygon points="847.7,150 877.3,156.7 865.5,173 836,166.3" fill="#c08814"/>
<polygon points="836,166.3 865.5,173 853.8,189.3 824.2,182.6" fill="#c08814"/>
<polygon points="824.2,182.6 853.8,189.3 842.1,205.6 812.5,198.9" fill="#c08814"/>
<polygon points="812.5,198.9 842.1,205.6 830.3,221.9 800.7,215.2" fill="#c08814"/>
<polygon points="800.7,215.2 830.3,221.9 818.5,238.2 788.9,231.5" fill="#c08814"/>
<polygon points="788.9,231.5 818.5,238.2 806.8,254.5 777.2,247.8" fill="#c08814"/>
<polygon points="777.2,247.8 806.8,254.5 795,270.8 765.4,264.1" fill="#c08814"/>
<polygon points="765.4,264.1 795,270.8 783.2,287.1 753.6,280.4" fill="#c08814"/>
<polygon points="753.6,280.4 783.2,287.1 771.5,303.5 741.8,296.8" fill="#c08814"/>
<polygon points="741.8,296.8 771.5,303.5 759.7,319.8 730,313.1" fill="#c08814"/>
<polygon points="877.3,156.7 906.8,163.5 895.1,179.7 865.5,173" fill="#c08814"/>
<polygon points="865.5,173 895.1,179.7 883.4,196 853.8,189.3" fill="#c08814"/>
<polygon points="853.8,189.3 883.4,196 871.6,212.3 842.1,205.6" fill="#c08814"/>
<polygon points="842.1,205.6 871.6,212.3 859.9,228.6 830.3,221.9" fill="#c08814"/>
<polygon points="830.3,221.9 859.9,228.6 848.2,244.9 818.5,238.2" fill="#c08814"/>
<polygon points="818.5,238.2 848.2,244.9 836.4,261.2 806.8,254.5" fill="#c08814"/>
<polygon points="806.8,254.5 836.4,261.2 824.6,277.5 795,270.8" fill="#c08814"/>
<polygon points="795,270.8 824.6,277.5 812.9,293.8 783.2,287.1" fill="#c08814"/>
<polygon points="783.2,287.1 812.9,293.8 801.1,310.2 771.5,303.5" fill="#c08814"/>
<polygon points="771.5,303.5 801.1,310.2 789.3,326.5 759.7,319.8" fill="#c08814"/>
<polygon points="906.8,163.5 936.4,170.2 924.7,186.4 895.1,179.7" fill="#c08814"/>
<polygon points="895.1,179.7 924.7,186.4 913,202.7 883.4,196" fill="#c08814"/>
<polygon points="883.4,196 913,202.7 901.2,219 871.6,212.3" fill="#c08814"/>
<polygon points="871.6,212.3 901.2,219 889.5,235.3 859.9,228.6" fill="#c08814"/>
<polygon points="859.9,228.6 889.5,235.3 877.8,251.6 848.2,244.9" fill="#c08814"/>
<polygon points="848.2,244.9 877.8,251.6 866,267.9 836.4,261.2" fill="#c08814"/>
<polygon points="836.4,261.2 866,267.9 854.3,284.2 824.6,277.5" fill="#c08814"/>
<polygon points="824.6,277.5 854.3,284.2 842.5,300.6 812.9,293.8" fill="#c08814"/>
<polygon points="812.9,293.8 842.5,300.6 830.7,316.9 801.1,310.2" fill="#c08814"/>
<polygon points="801.1,310.2 830.7,316.9 819,333.2 789.3,326.5" fill="#c08814"/>
<polygon points="936.4,170.2 966,176.9 954.2,193.1 924.7,186.4" fill="#c08814"/>
<polygon points="924.7,186.4 954.2,193.1 942.5,209.4 913,202.7" fill="#c08814"/>
<polygon points="913,202.7 942.5,209.4 930.8,225.7 901.2,219" fill="#c08814"/>
<polygon points="901.2,219 930.8,225.7 919.1,242 889.5,235.3" fill="#c08814"/>
<polygon points="889.5,235.3 919.1,242 907.3,258.3 877.8,251.6" fill="#c08814"/>
<polygon points="877.8,251.6 907.3,258.3 895.6,274.6 866,267.9" fill="#c08814"/>
<polygon points="866,267.9 895.6,274.6 883.9,290.9 854.3,284.2" fill="#c08814"/>
<polygon points="854.3,284.2 883.9,290.9 872.1,307.3 842.5,300.6" fill="#c08814"/>
<polygon points="842.5,300.6 872.1,307.3 860.4,323.6 830.7,316.9" fill="#c08814"/>
<polygon points="830.7,316.9 860.4,323.6 848.6,339.9 819,333.2" fill="#c08814"/>
<polygon points="966,176.9 995.5,183.6 983.8,199.8 954.2,193.1" fill="#00be00"/>
<polygon points="954.2,193.1 983.8,199.8 972.1,216.1 942.5,209.4" fill="#00be00"/>
<polygon points="942.5,209.4 972.1,216.1 960.4,232.4 930.8,225.7" fill="#c08814"/>
<polygon points="930.8,225.7 960.4,232.4 948.7,248.7 919.1,242" fill="#c08814"/>
<polygon points="919.1,242 948.7,248.7 936.9,265 907.3,258.3" fill="#c08814"/>
<polygon points="907.3,258.3 936.9,265 925.2,281.3 895.6,274.6" fill="#c08814"/>
<polygon points="895.6,274.6 925.2,281.3 913.5,297.6 883.9,290.9" fill="#c08814"/>
<polygon points="883.9,290.9 913.5,297.6 901.7,314 872.1,307.3" fill="#c08814"/>
<polygon points="872.1,307.3 901.7,314 890,330.3 860.4,323.6" fill="#00be00"/>
<polygon points="860.4,323.6 890,330.3 878.2,346.6 848.6,339.9" fill="#00be00"/>
<polygon points="995.5,183.6 1025.1,190.3 1013.4,206.6 983.8,199.8" fill="#00be00"/>
<polygon points="983.8,199.8 1013.4,206.6 1001.7,222.8 972.1,216.1" fill="#00be00"/>
<polygon points="972.1,216.1 1001.7,222.8 990,239.1 960.4,232.4" fill="#c08814"/>
<polygon points="960.4,232.4 990,239.1 978.2,255.4 948.7,248.7" fill="#c08814"/>
<polygon points="948.7,248.7 978.2,255.4 966.5,271.7 936.9,265" fill="#c08814"/>
<polygon points="936.9,265 966.5,271.7 954.8,288 925.2,281.3" fill="#c08814"/>
<polygon points="925.2,281.3 954.8,288 943.1,304.4 913.5,297.6" fill="#c08814"/>
<polygon points="913.5,297.6 943.1,304.4 931.3,320.7 901.7,314" fill="#c08814"/>
<polygon points="901.7,314 931.3,320.7 919.6,337 890,330.3" fill="#00be00"/>
<polygon points="890,330.3 919.6,337 907.8,353.4 878.2,346.6" fill="#00be00"/>
</g>
<g stroke="#0000ff" stroke-width="2" fill="none">
<line x1="1025" y1="126.5" x2="1025" y2="190"/>
<path stroke-width="1.3" d="M1025.3 190.5L1021.4 173.4M1025.3 190.5L1031.6 175M1025.3 190.5L1027.3 172.6"/><ellipse stroke-width="1.3" cx="1026.5" cy="174.2" rx="5.1" ry="1.8" transform="rotate(8 1026.5 174.2)"/>
<line x1="908" y1="419" x2="908" y2="354"/>
<path stroke-width="1.3" d="M908 353.6L903.4 369M908 353.6L914 369.6M908 353.6L909.5 371.5"/><ellipse stroke-width="1.3" cx="908.6" cy="370" rx="5.4" ry="2.2"/>
</g>
<g class="frc"><text x="1024.2" y="126.6" textLength="113" lengthAdjust="spacingAndGlyphs" xml:space="preserve">FORCE =  5.00e+01</text>
<text x="908.8" y="418.6" textLength="112.5" lengthAdjust="spacingAndGlyphs" xml:space="preserve">FORCE =  5.00e+01</text></g>
<g fill="none" stroke-width="1.2">
<g stroke="#00e000"><line x1="77.5" y1="474.5" x2="77.5" y2="420"/><path d="M77.5 419.5L74 439M77.5 419.5L81 439M77.5 419.5L76.5 441M77.5 419.5L78.8 441"/><ellipse cx="77.5" cy="439.5" rx="3.6" ry="1.6"/></g>
<g stroke="#ff1a1a"><line x1="77.5" y1="474.5" x2="131" y2="486.3"/><path d="M131 486.3L115.5 479.4M131 486.3L114.6 487.2M131 486.3L116.6 485.4"/><ellipse cx="115.4" cy="483.2" rx="1.6" ry="4" transform="rotate(12 115.4 483.2)"/></g>
<g stroke="#0000ff"><line x1="77.5" y1="474.5" x2="52" y2="508"/><path d="M52 508L59 494M52 508L66 497.5M52 508L63.5 493.6"/><ellipse cx="62.4" cy="495.6" rx="4.2" ry="1.7" transform="rotate(38 62.4 495.6)"/></g>
</g>
<g class="axl"><text x="75.6" y="408.5">Y</text><text x="150" y="491.5">X</text><text x="46.6" y="516.8">Z</text></g>
</svg></div>
<div style="position:absolute;left:7px;top:0;font-size:8.8px;font-weight:bold;color:#3c3c3c;line-height:10px;letter-spacing:.7px">123</div>
<div style="position:absolute;left:1px;width:27px;height:27px;border:1px solid #8e8e8e;box-shadow:inset 1.500px 1.500px 0 #fff,inset -1px -1px 0 rgba(255,255,255,.6);background:linear-gradient(160deg,#ffe2ae 0%,#ffd08c 45%,#f8a654 100%);top:11px"><svg class="ico" style="left:0;top:0" width="26" height="26" viewBox="0 0 26 26"><path d="M3 6l9.300-2v8l-9.300 2z" fill="#7878c0" stroke="#30306a" stroke-width=".8"/><path d="M3 10l9.300-2M7.600 5v8" stroke="#30306a" stroke-width=".8"/><text x="4.200" y="23.600" font-size="8.300" font-weight="bold" fill="#555" font-family="Liberation Sans,sans-serif" letter-spacing=".4">ABC</text></svg></div>
<div style="position:absolute;left:1px;width:27px;height:27px;border:1px solid #8e8e8e;box-shadow:inset 1.500px 1.500px 0 #fff,inset -1px -1px 0 rgba(255,255,255,.6);background:linear-gradient(160deg,#ffe2ae 0%,#ffd08c 45%,#f8a654 100%);top:39px"><svg class="ico" style="left:0;top:0" width="26" height="26" viewBox="0 0 26 26"><path d="M5 2v9" stroke="#e01010" stroke-width="1.600"/><path d="M2.600 9h4.800L5 13z" fill="#e01010"/><circle cx="4.800" cy="14.800" r="1.700" fill="#111"/><text x="4.200" y="23.600" font-size="8.300" font-weight="bold" fill="#555" font-family="Liberation Sans,sans-serif" letter-spacing=".4">ABC</text></svg></div>
<svg class="ico" style="left:0;top:66px" width="30" height="28" viewBox="0 66 30 28"><g fill="#9a9ad2" stroke="#34346e" stroke-width=".8" stroke-linejoin="round"><path d="M4.100 76.400L17 72.700V78.200L4.100 81.400z"/><path d="M13.300 82.300L25.700 78.700V84.200L13.300 87.400z"/><path d="M10.600 74.600v5.300M19.500 80.500v5.300" fill="none"/></g><path d="M6.900 70.200v4" stroke="#e80c0c" stroke-width="1.600"/><path d="M4.800 73.200h4.200L6.900 76.600z" fill="#e80c0c"/><path d="M22.900 86v3.500" stroke="#e80c0c" stroke-width="1.600"/><path d="M20.600 88.300h4.600L22.900 92z" fill="#e80c0c"/><path d="M19.200 74.500a3.200 3.200 0 0 1 4.800-3M25 73.500a3.200 3.200 0 0 1-4.800 3.200" stroke="#8c8c8c" stroke-width="1.500" fill="none"/></svg>
<div style="position:absolute;left:1px;width:27px;height:27px;border:1px solid #8e8e8e;box-shadow:inset 1.500px 1.500px 0 #fff,inset -1px -1px 0 rgba(255,255,255,.6);background:linear-gradient(160deg,#ffe2ae 0%,#ffd08c 45%,#f8a654 100%);top:95px"><svg class="ico" style="left:-1px;top:0" width="26" height="26" viewBox="0 0 26 26"><path d="M6 10l16-5v12l-16 5z" fill="#5a90e0" stroke="#223" stroke-width="1"/><g fill="#fff" stroke="#222" stroke-width=".9"><circle cx="6" cy="10" r="1.800"/><circle cx="22" cy="5" r="1.800"/><circle cx="22" cy="17" r="1.800"/><circle cx="6" cy="22" r="1.800"/></g></svg></div>
<svg class="ico" style="left:0;top:526px" width="930" height="34" viewBox="0 526 930 34">
<defs><linearGradient id="fg" x1="0" y1="0" x2="0" y2="1"><stop offset="0" stop-color="#fdf0c8"/><stop offset=".45" stop-color="#fbe09a"/><stop offset="1" stop-color="#f2bc5c"/></linearGradient><linearGradient id="rb"><stop offset="0" stop-color="#f0f"/><stop offset=".22" stop-color="#22f"/><stop offset=".42" stop-color="#0ee"/><stop offset=".6" stop-color="#0e0"/><stop offset=".8" stop-color="#ff0"/><stop offset="1" stop-color="#f80"/></linearGradient><linearGradient id="sg" x1="0" y1="0" x2="0" y2="1"><stop offset="0" stop-color="#fff000"/><stop offset="1" stop-color="#e89800"/></linearGradient><linearGradient id="mg" x1="0" y1="0" x2="0" y2="1"><stop offset="0" stop-color="#3a78c8"/><stop offset="1" stop-color="#80bcec"/></linearGradient><linearGradient id="ag" x1="0" y1="0" x2="1" y2="1"><stop offset="0" stop-color="#7474b8"/><stop offset="1" stop-color="#a4a4d8"/></linearGradient></defs>
<path d="M0 530.800h1.400v2.400H0zM0 537.700h1.400v2.400H0zM0 544.700h1.400v2.400H0zM0 551.600h1.400v2.400H0z" fill="#000"/>
<g transform="translate(8.2 532.1)"><path d="M.4 2.200q0-1.800 1.800-1.800h5q1 0 1.500.8l.3.500h6.700q1.600 0 1.600 1.600v10.500q0 1.600-1.600 1.600h-13.500q-1.800 0-1.800-1.800z" fill="url(#fg)" stroke="#dcae58" stroke-width=".8"/><path d="M1.600 1.700h5.600v1.300h-5.600z" fill="#fff8e4"/><circle cx="3" cy="1.700" r=".7" fill="#f0406a"/><path d="M1.200 3.500h15.200" stroke="#fff6d8" stroke-width=".8"/></g>
<path d="M14.400000000000002 543.2v2.6l5.2 2.6v-2.6z" fill="#10b010" stroke="#0a7a0a" stroke-width="0.7" stroke-linejoin="round"/><path d="M24.8 543.2v2.6l-5.2 2.6v-2.6z" fill="#18c818" stroke="#0a7a0a" stroke-width="0.7" stroke-linejoin="round"/><path d="M14.400000000000002 543.2l5.2 -2.6l5.2 2.6l-5.2 2.6z" fill="#5cf05c" stroke="#0a7a0a" stroke-width="0.7" stroke-linejoin="round"/>
<path d="M9.2 548.6v2.6l5.4 2.7v-2.6z" fill="#0808e0" stroke="#0808a0" stroke-width="0.7" stroke-linejoin="round"/><path d="M20.0 548.6v2.6l-5.4 2.7v-2.6z" fill="#1818f0" stroke="#0808a0" stroke-width="0.7" stroke-linejoin="round"/><path d="M9.2 548.6l5.4 -2.7l5.4 2.7l-5.4 2.7z" fill="#6a6aff" stroke="#0808a0" stroke-width="0.7" stroke-linejoin="round"/>
<path d="M20.1 548.6v2.5l4.9 2.5v-2.5z" fill="#e08a10" stroke="#a86408" stroke-width="0.7" stroke-linejoin="round"/><path d="M29.9 548.6v2.5l-4.9 2.5v-2.5z" fill="#f09a20" stroke="#a86408" stroke-width="0.7" stroke-linejoin="round"/><path d="M20.1 548.6l4.9 -2.5l4.9 2.5l-4.9 2.5z" fill="#ffbc50" stroke="#a86408" stroke-width="0.7" stroke-linejoin="round"/>
<g transform="translate(36.1 532.1)"><path d="M.4 2.200q0-1.800 1.800-1.800h5q1 0 1.500.8l.3.500h6.700q1.600 0 1.600 1.600v10.500q0 1.600-1.600 1.600h-13.500q-1.800 0-1.800-1.800z" fill="url(#fg)" stroke="#dcae58" stroke-width=".8"/><path d="M1.600 1.700h5.600v1.300h-5.600z" fill="#fff8e4"/><circle cx="3" cy="1.700" r=".7" fill="#f0406a"/><path d="M1.200 3.500h15.200" stroke="#fff6d8" stroke-width=".8"/></g>
<path d="M40.2 545.3v4.4l8.4 4.2v-4.4z" fill="#1010f0" stroke="#000060" stroke-width="0.9" stroke-linejoin="round"/><path d="M57.0 545.3v4.4l-8.4 4.2v-4.4z" fill="#2424ff" stroke="#000060" stroke-width="0.9" stroke-linejoin="round"/><path d="M40.2 545.3l8.4 -4.2l8.4 4.2l-8.4 4.2z" fill="#7c7cff" stroke="#000060" stroke-width="0.9" stroke-linejoin="round"/>
<g transform="translate(64.3 532.1)"><path d="M.4 2.200q0-1.800 1.800-1.800h5q1 0 1.500.8l.3.500h6.700q1.600 0 1.600 1.600v10.500q0 1.600-1.600 1.600h-13.500q-1.800 0-1.800-1.800z" fill="url(#fg)" stroke="#dcae58" stroke-width=".8"/><path d="M1.600 1.700h5.600v1.300h-5.600z" fill="#fff8e4"/><circle cx="3" cy="1.700" r=".7" fill="#f0406a"/><path d="M1.200 3.500h15.200" stroke="#fff6d8" stroke-width=".8"/></g>
<path d="M74.800 543.200h3.600l-.6 3 .6 3.200h-3.600l.6-3.200z" fill="#b8b8b8" stroke="#6a6a6a" stroke-width=".6"/><path d="M71.400 540v12.500h12.600" fill="none" stroke="#111" stroke-width="1"/><path d="M72.400 551.600Q71.400 540.500 78.800 540.300Q82.600 540.200 83.800 543" fill="none" stroke="#f01010" stroke-width="1.300"/>
<g transform="translate(92.2 532.1)"><path d="M.4 2.200q0-1.800 1.800-1.800h5q1 0 1.500.8l.3.500h6.700q1.600 0 1.600 1.600v10.500q0 1.600-1.600 1.600h-13.500q-1.800 0-1.800-1.800z" fill="url(#fg)" stroke="#dcae58" stroke-width=".8"/><path d="M1.600 1.700h5.600v1.300h-5.600z" fill="#fff8e4"/><circle cx="3" cy="1.700" r=".7" fill="#f0406a"/><path d="M1.200 3.500h15.200" stroke="#fff6d8" stroke-width=".8"/></g>
<text x="96" y="542" font-size="9.500" font-weight="bold" fill="#000" font-family="Liberation Sans,sans-serif">t</text>
<path d="M92.900 545.600h2.800M94.300 545.600v-2.200M92.900 549.300h2.800M94.300 549.300v2.300" stroke="#c81010" stroke-width=".9" fill="none"/>
<path d="M97.3 545.3v4.4l8.4 4.2v-4.4z" fill="#5c5c5c" stroke="#222" stroke-width="0.9" stroke-linejoin="round"/><path d="M114.10000000000001 545.3v4.4l-8.4 4.2v-4.4z" fill="#7c7c7c" stroke="#222" stroke-width="0.9" stroke-linejoin="round"/><path d="M97.3 545.3l8.4 -4.2l8.4 4.2l-8.4 4.2z" fill="#bcbcbc" stroke="#222" stroke-width="0.9" stroke-linejoin="round"/>
<g transform="translate(120.4 532.1)"><path d="M.4 2.200q0-1.800 1.800-1.800h5q1 0 1.500.8l.3.500h6.700q1.600 0 1.600 1.600v10.500q0 1.600-1.600 1.600h-13.500q-1.800 0-1.800-1.800z" fill="url(#fg)" stroke="#dcae58" stroke-width=".8"/><path d="M1.600 1.700h5.600v1.300h-5.600z" fill="#fff8e4"/><circle cx="3" cy="1.700" r=".7" fill="#f0406a"/><path d="M1.200 3.500h15.200" stroke="#fff6d8" stroke-width=".8"/></g>
<path d="M130.600 534.300v10" stroke="#f00808" stroke-width="2.400"/><path d="M126.400 543.300h8.500l-4.300 6z" fill="#f00808"/><circle cx="130.500" cy="551.500" r="2.400" fill="#111"/><circle cx="129.800" cy="550.800" r=".7" fill="#777"/>
<rect x="134.2" y="547" width="7.800" height="6.900" fill="#5aae1c" stroke="#3a8208" stroke-width=".7"/><path d="M135.39999999999998 548.7h5.400M135.39999999999998 550.5h5.400M135.39999999999998 552.3h5.400" stroke="#b6ee7c" stroke-width="1"/>
<g transform="translate(148.2 531.3)"><path d="M.4 2.200q0-1.800 1.800-1.800h5q1 0 1.500.8l.3.500h6.700q1.600 0 1.600 1.600v10.500q0 1.600-1.600 1.600h-13.500q-1.800 0-1.800-1.800z" fill="url(#fg)" stroke="#dcae58" stroke-width=".8"/><path d="M1.600 1.700h5.600v1.300h-5.600z" fill="#fff8e4"/><circle cx="3" cy="1.700" r=".7" fill="#f0406a"/><path d="M1.200 3.500h15.200" stroke="#fff6d8" stroke-width=".8"/></g>
<path d="M159.700 544.300v-8M159.700 544.300l-8.200 4M159.700 544.300l4 2" stroke="#7078b8" stroke-width="1.700" fill="none" stroke-linecap="round"/><path d="M158.300 538l1.400-2.400 1.400 2.400z" fill="#7078b8"/>
<rect x="162.1" y="546" width="7.800" height="6.900" fill="#5aae1c" stroke="#3a8208" stroke-width=".7"/><path d="M163.29999999999998 547.7h5.400M163.29999999999998 549.5h5.400M163.29999999999998 551.3h5.400" stroke="#b6ee7c" stroke-width="1"/>
<path d="M175 542h5.2l-2.6 3.2z" fill="#000"/>
<path d="M187.500 534v17" stroke="#a0a0a0" stroke-width="1"/>
<path d="M201.700 537.900L213 548.700M213 537.900L201.700 548.700" stroke="#c01822" stroke-width="6.200" stroke-linecap="round"/><path d="M201.700 537.900L213 548.700M213 537.900L201.700 548.700" stroke="#ec3a44" stroke-width="4.600" stroke-linecap="round"/>
<path d="M224.8 545.5q-.6-6.500 4-9.500l8.300-2.600q1.300-.3 1.300 1v10.800q0 1-1 1.300l-9.800 3q-2.500.6-2.800-4z" fill="#9c9c9c" stroke="#5e5e5e" stroke-width=".8"/>
<path d="M229.10000000000002 547.1q-.6-6.500 4-9.500l8.300-2.600q1.300-.3 1.300 1v10.800q0 1-1 1.300l-9.800 3q-2.500.6-2.800-4z" fill="#a8a8a8" stroke="#5e5e5e" stroke-width=".8"/>
<path d="M233.4 548.7q-.6-6.500 4-9.500l8.300-2.600q1.300-.3 1.300 1v10.800q0 1-1 1.300l-9.800 3q-2.500.6-2.800-4z" fill="#b2b2b2" stroke="#5e5e5e" stroke-width=".8"/>
<g transform="translate(252.300 533.700) scale(.86 1) skewY(-9)"><g transform="translate(0 0)"><path d="M.4 2.200q0-1.800 1.800-1.800h5q1 0 1.500.8l.3.500h6.700q1.600 0 1.600 1.600v10.500q0 1.600-1.600 1.600h-13.500q-1.800 0-1.800-1.800z" fill="url(#fg)" stroke="#dcae58" stroke-width=".8"/><path d="M1.600 1.700h5.600v1.300h-5.600z" fill="#fff8e4"/><circle cx="3" cy="1.700" r=".7" fill="#f0406a"/><path d="M1.200 3.500h15.200" stroke="#fff6d8" stroke-width=".8"/></g></g>
<g transform="translate(258.600 538.200) scale(.87 1) skewY(-9)"><g transform="translate(0 0)"><path d="M.4 2.200q0-1.800 1.800-1.800h5q1 0 1.500.8l.3.500h6.700q1.600 0 1.600 1.600v10.500q0 1.600-1.600 1.600h-13.500q-1.800 0-1.800-1.800z" fill="url(#fg)" stroke="#dcae58" stroke-width=".8"/><path d="M1.600 1.700h5.600v1.300h-5.600z" fill="#fff8e4"/><circle cx="3" cy="1.700" r=".7" fill="#f0406a"/><path d="M1.200 3.500h15.200" stroke="#fff6d8" stroke-width=".8"/></g></g>
<path d="M256.700 542.300Q256.300 547.800 262.300 547.300" fill="none" stroke="#f01414" stroke-width="2.300"/><path d="M261.500 544l5 3.200-5 3.400z" fill="#f01414"/>
<g font-family="Liberation Sans,sans-serif" font-weight="bold" font-size="6.800" fill="#444"><text x="290.800" y="538.500">2</text><text x="289.600" y="545.500">1</text><text x="288.800" y="552.400">3</text></g>
<path d="M283 537.800l3.200 3M283 537.800l3.200-.3M283 537.800l.4 3" stroke="#e01010" stroke-width="1.200" fill="none"/><path d="M295.200 544.300l4.200-4M299.400 540.300l-3.300.2M299.400 540.300l-.2 3.300" stroke="#e01010" stroke-width="1.200" fill="none"/>
<path d="M311.7 530.800h2.400v2.400h-2.400zM311.7 537.700h2.400v2.400h-2.400zM311.7 544.700h2.400v2.400h-2.400zM311.7 551.600h2.400v2.400h-2.400z" fill="#000"/>
<rect x="317.800" y="532.100" width="99.400" height="20.800" fill="#fff"/><rect x="400.900" y="533.200" width="15.100" height="18.700" fill="#f0f0f0"/>
<path d="M319.300 539.800Q321 534.800 325.600 534.300L334.900 540.200Q334.800 538 332 538.300Q329 539 327.200 545.500z" fill="url(#ag)" stroke="#3c3c6c" stroke-width=".8" stroke-linejoin="round"/><path d="M334.900 540.200v2.200l-1.500-1.600" fill="#5c5c98" stroke="#3c3c6c" stroke-width=".6"/>
<rect x="319.600" y="549.700" width="14.800" height="2.500" rx="1.200" fill="url(#rb)" stroke="#444" stroke-width=".5"/>
<path d="M404.6 541h7.7l-3.85 4z" fill="#000"/>
<g transform="translate(419.7 533.7)"><path d="M.5 7.400Q1 .7 9 .4L21.400 7.600Q22.700 8.600 22.300 10Q20.600 6 17 7.200Q13.300 8.800 11.800 15.900z" fill="#fdfdfd" stroke="#3a3a3a" stroke-width=".9" stroke-linejoin="round"/><path d="M22.300 10l-1.300 1.100Q19.600 7.900 17.300 8.800Q16 9.400 15 11" fill="none" stroke="#3a3a3a" stroke-width=".8"/></g>
<path d="M447 542.1h5l-2.5 3.1z" fill="#000"/>
<g transform="translate(458 533.7)"><path d="M.5 7.400Q1 .7 9 .4L21.400 7.600Q22.700 8.600 22.300 10Q20.600 6 17 7.200Q13.300 8.800 11.800 15.900z" fill="url(#ag)" stroke="#30305c" stroke-width=".9" stroke-linejoin="round"/><path d="M22.300 10l-1.300 1.100Q19.600 7.900 17.300 8.800Q16 9.400 15 11" fill="none" stroke="#30305c" stroke-width=".8"/></g>
<path d="M484.9 542.1h5.2l-2.6 3.1z" fill="#000"/>
<g stroke="#2c2c54" stroke-width=".8" stroke-linejoin="round"><path d="M496.300 538.800l10.200-5.500 10.200 5.500-10.200 5.300z" fill="#b4b4e6"/><path d="M496.300 538.800v9.800l10.200 5.300v-9.800z" fill="#7878b4"/><path d="M516.700 538.800v9.800l-10.200 5.300v-9.800z" fill="#c8c8ee"/><path d="M508 545.200l7.400-3.800v6.400l-7.400 3.900z" fill="#dcdcf6" stroke-width=".5"/><path d="M508 545.200l7.400-3.800l-3.600 5.300z" fill="#a8a8cc" stroke-width=".4"/><path d="M511.800 546.700l3.600 1.100M511.800 546.700l-3.800 5" stroke-width=".4" fill="none"/></g>
<path d="M525.400 534v16.500" stroke="#a0a0a0" stroke-width="1"/>
<rect x="530.900" y="532.100" width="105.200" height="20.800" fill="#fff"/><rect x="620.200" y="533.200" width="14.700" height="18.700" fill="#f0f0f0"/>
<g transform="translate(532.100 532.100) scale(.75)"><g transform="translate(0 0)" stroke="#26264e" stroke-width=".8" stroke-linejoin="round"><path d="M.4 5.600L10.600.4l10.200 5.200-10.200 5.200z" fill="#a0a0d8"/><path d="M.4 5.600v10.200l10.200 5.200v-10.200z" fill="#5c5ca0"/><path d="M20.800 5.600v10.200l-10.200 5.200v-10.200z" fill="#7c7cbc"/><path d="M5.500 3l10.200 5.200v10.200M15.700 3L5.500 8.200v10.200M.4 10.700l10.200 5.200 10.200-5.200" fill="none"/></g></g>
<rect x="532.800" y="549.700" width="14.800" height="2.500" rx="1.200" fill="url(#rb)" stroke="#444" stroke-width=".5"/>
<path d="M623.8 541h7.5l-3.75 4z" fill="#000"/>
<g transform="translate(638.9 532.1)" stroke="#2a2a2a" stroke-width=".8" stroke-linejoin="round"><path d="M.4 5.600L10.600.4l10.200 5.200-10.200 5.200z" fill="#fff"/><path d="M.4 5.600v10.200l10.200 5.200v-10.200z" fill="#fff"/><path d="M20.800 5.600v10.200l-10.200 5.200v-10.200z" fill="#fff"/><path d="M5.500 3l10.200 5.200v10.200M15.700 3L5.500 8.200v10.200M.4 10.700l10.200 5.200 10.200-5.200" fill="none"/></g>
<path d="M666 542.1h5.1l-2.55 3.1z" fill="#000"/>
<g transform="translate(677 532.1)" stroke="#20204a" stroke-width=".8" stroke-linejoin="round"><path d="M.4 5.600L10.600.4l10.200 5.200-10.200 5.200z" fill="#a8a8e0"/><path d="M.4 5.600v10.200l10.200 5.200v-10.200z" fill="#5c5ca4"/><path d="M20.800 5.600v10.200l-10.200 5.200v-10.200z" fill="#8080c0"/><path d="M5.500 3l10.200 5.200v10.200M15.700 3L5.500 8.200v10.200M.4 10.700l10.200 5.200 10.200-5.200" fill="none"/></g>
<path d="M703.9 542.1h5.1l-2.55 3.1z" fill="#000"/>
<path d="M720.600 546.100L732.400 540" stroke="#2e2e2e" stroke-width="1.900" stroke-linecap="round"/>
<path d="M741.7 542.1h5.2l-2.6 3.1z" fill="#000"/>
<path d="M753.300 542.700l10.300-5.500 10.300 5.500-10.300 5.500z" fill="#8c8c8c" stroke="#333" stroke-width=".8"/><path d="M758.400 540l10.400 5.500M768.800 540l-10.400 5.500" stroke="#333" stroke-width=".8"/>
<path d="M779.9 542.1h5.3l-2.65 3.1z" fill="#000"/>
<path d="M791.4 541.1v3l10.2 5.6v-3z" fill="#3838f8" stroke="#08083a" stroke-width="0.9" stroke-linejoin="round"/><path d="M811.8000000000001 541.1v3l-10.2 5.6v-3z" fill="#4848ff" stroke="#08083a" stroke-width="0.9" stroke-linejoin="round"/><path d="M791.4 541.1l10.2 -5.6l10.2 5.6l-10.2 5.6z" fill="#b8b8ff" stroke="#08083a" stroke-width="0.9" stroke-linejoin="round"/>
<path d="M817.8 542.1h5.3l-2.65 3.1z" fill="#000"/>
<path d="M833.2 540.4l5.300-1.600v4.600l-5.300 1.600z" fill="#7c7cc0" stroke="#44448a" stroke-width=".6"/>
<path d="M841.4 536.4l5.300-1.600v4.600l-5.300 1.600z" fill="#7c7cc0" stroke="#44448a" stroke-width=".6"/>
<path d="M833.2 547.8l5.300-1.600v4.600l-5.300 1.600z" fill="#7c7cc0" stroke="#44448a" stroke-width=".6"/>
<path d="M841.4 543.7l5.300-1.600v4.600l-5.300 1.600z" fill="#7c7cc0" stroke="#44448a" stroke-width=".6"/>
<rect x="859.200" y="534.700" width="18" height="13.800" rx="1.200" fill="url(#mg)" stroke="#5c6066" stroke-width="1.300"/><path d="M866 535.500l1.600 4.200" stroke="#2c5ca8" stroke-width=".8"/><path d="M866.300 549h3.500v3.200h-3.500z" fill="#111"/><path d="M864.100 552.100h7.900v1.500h-7.900z" fill="#666"/>
<path d="M888.8 530.800h2.400v2.400h-2.400zM888.8 537.700h2.400v2.400h-2.400zM888.8 544.700h2.400v2.400h-2.400zM888.8 551.600h2.400v2.400h-2.400z" fill="#000"/>
<path d="M909 534.200l3 6.100 6.700 1-4.900 4.700 1.200 6.700-6-3.200-6 3.200 1.200-6.700-4.900-4.700 6.700-1z" fill="url(#sg)" stroke="#b48408" stroke-width="1" stroke-linejoin="round"/>
<g font-family="Liberation Sans,sans-serif" font-size="11.800" fill="#000"><text x="339.700" y="546.500" textLength="39.200" lengthAdjust="spacingAndGlyphs">By Topo</text><text x="552.400" y="546.500" textLength="41.700" lengthAdjust="spacingAndGlyphs">By Comp</text></g>
</svg>
<div class="radio on" style="top:572.4px"></div><div class="rl" style="top:569.5px">collectors</div>
<div class="radio" style="top:591.9px"></div><div class="rl" style="top:589px">includes</div>
<div class="radio" style="top:611.7px"></div><div class="rl" style="top:608.8px">modules</div>
<div class="btn" style="left:204px;top:567px;width:41.600px;height:20px;border-right-width:1.400px"><i class="dd" style="left:13.800px;top:5.900px;border-left-width:5.700px;border-right-width:5.700px;border-top-width:6.200px"></i></div>
<div style="position:absolute;left:245.600px;top:567px;width:294.400px;height:20px;background:#e6e464;border:2.300px solid #00ffff;text-align:center;line-height:15px;padding-left:3px">elems</div>
<div class="btn" style="left:540px;top:567px;width:42px;height:20px"><svg class="ico" style="left:13px;top:3px" width="14" height="12" viewBox="0 0 14 12"><path d="M1 0h3v11H1zM6 5.500L12.200 0v11z" fill="#000"/></svg></div>
<div class="btn" style="left:1109px;top:567px;width:99px;height:20px;text-align:left;padding-left:21px">color<i style="position:absolute;left:3px;top:2px;width:12px;height:12px;background:#3264e6;border:1px solid #000"></i></div>
<div class="btn" style="left:204px;top:607px;width:41.600px;height:20px;border-right-width:1.400px"><svg class="ico" style="left:15.700px;top:2.800px" width="8" height="12" viewBox="0 0 8 12"><path d="M3.700 0L7.400 4.400H0zM0 5.200h7.400v1H0zM0 7.100h7.400L3.700 11.100z" fill="#000"/></svg></div>
<div class="btn" style="left:245.600px;top:607px;width:336.400px;height:20px;padding-left:5px;letter-spacing:-.1px">dest component =</div>
<div style="position:absolute;left:582px;top:607px;width:565px;height:20px;background:#fff;border-top:2px solid #6a6a6a;border-left:2px solid #6a6a6a;border-bottom:1px solid #e8e8e8;border-right:1px solid #e8e8e8"></div>
<span style="position:absolute;left:592.4px;top:608px;width:20px;text-align:center;line-height:17px">n</span>
<span style="position:absolute;left:612.4px;top:608px;width:20px;text-align:center;line-height:17px">o</span>
<span style="position:absolute;left:632.5px;top:608px;width:20px;text-align:center;line-height:17px">n</span>
<span style="position:absolute;left:652.5px;top:608px;width:20px;text-align:center;line-height:17px">d</span>
<span style="position:absolute;left:672.6px;top:608px;width:20px;text-align:center;line-height:17px">e</span>
<span style="position:absolute;left:692.6px;top:608px;width:20px;text-align:center;line-height:17px">s</span>
<span style="position:absolute;left:712.7px;top:608px;width:20px;text-align:center;line-height:17px">i</span>
<div class="gbtn" style="top:567px;height:19px;line-height:18px">move<i style="position:absolute;left:0;top:0;width:115.500px;height:16px;border:1.400px solid #0c240c"></i></div>
<div class="gbtn" style="top:588px;height:19px;line-height:16px">copy</div>
<div class="gbtn" style="top:607px;height:20px;line-height:17px">reject</div>
<div class="gbtn" style="top:687px;height:20px;line-height:17px;background:#c06060;border-color:#d98f8f #7f3f3f #7f3f3f #d98f8f">return</div>
<div style="position:absolute;left:0;top:710px;width:1468px;height:1px;background:#6e6e6e"></div><div style="position:absolute;left:0;top:711px;width:1468px;height:1px;background:#fff"></div>
<div class="sbox" style="left:938px;width:125px"></div>
<div class="sbox" style="left:1065px;width:124px"></div>
<div class="sbox" style="left:1190px;width:143px"></div>
<div class="sbox" style="left:1334px;width:138px"></div>
<i style="position:absolute;left:1197px;top:723px;width:10px;height:10px;background:#00f000;border:1px solid #000"></i><span style="position:absolute;left:1211px;top:719px;line-height:16px">nondesi</span>
<i style="position:absolute;left:1341px;top:723px;width:10px;height:10px;background:#0000f8;border:1px solid #000"></i><span style="position:absolute;left:1355px;top:719px;line-height:16px">force</span>
<div style="position:absolute;left:0;top:737px;width:1472px;height:1px;background:linear-gradient(90deg,#828282 0,#828282 43%,#a09e9a 50%,#9a9894 100%)"></div><div style="position:absolute;left:0;top:738px;width:1472px;height:3px;background:linear-gradient(90deg,#1c1c1c 0,#1c1c1c 43%,#55514a 50%,#4e4a44 72%,#403c3a 100%)"></div>
<svg class="ico" style="left:1320px;top:706px" width="150" height="32" viewBox="1320 706 150 32"><g font-family="Liberation Sans,Noto Sans CJK SC,sans-serif" fill="rgba(255,255,255,.6)" stroke="rgba(100,100,100,.82)" stroke-width=".8"><text x="1327" y="727.6" font-size="17.8" textLength="43.6" lengthAdjust="spacingAndGlyphs">CSDN</text><text x="1385.6" y="727.6" font-size="17.8" textLength="11.4" lengthAdjust="spacingAndGlyphs">@</text><text x="1398.4" y="729.2" font-size="18.6" textLength="58.6" lengthAdjust="spacingAndGlyphs">墨柳烟</text></g></svg>
<div class="red" style="left:123px;top:21px;width:1089px;height:468px;border-radius:3px"></div>
<div class="red" style="left:246px;top:521px;width:43px;height:41px"></div>
<div class="red" style="left:197px;top:557px;width:943px;height:82px"></div>
<div class="red" style="left:1318px;top:556px;width:132px;height:33px"></div>
</body></html>
